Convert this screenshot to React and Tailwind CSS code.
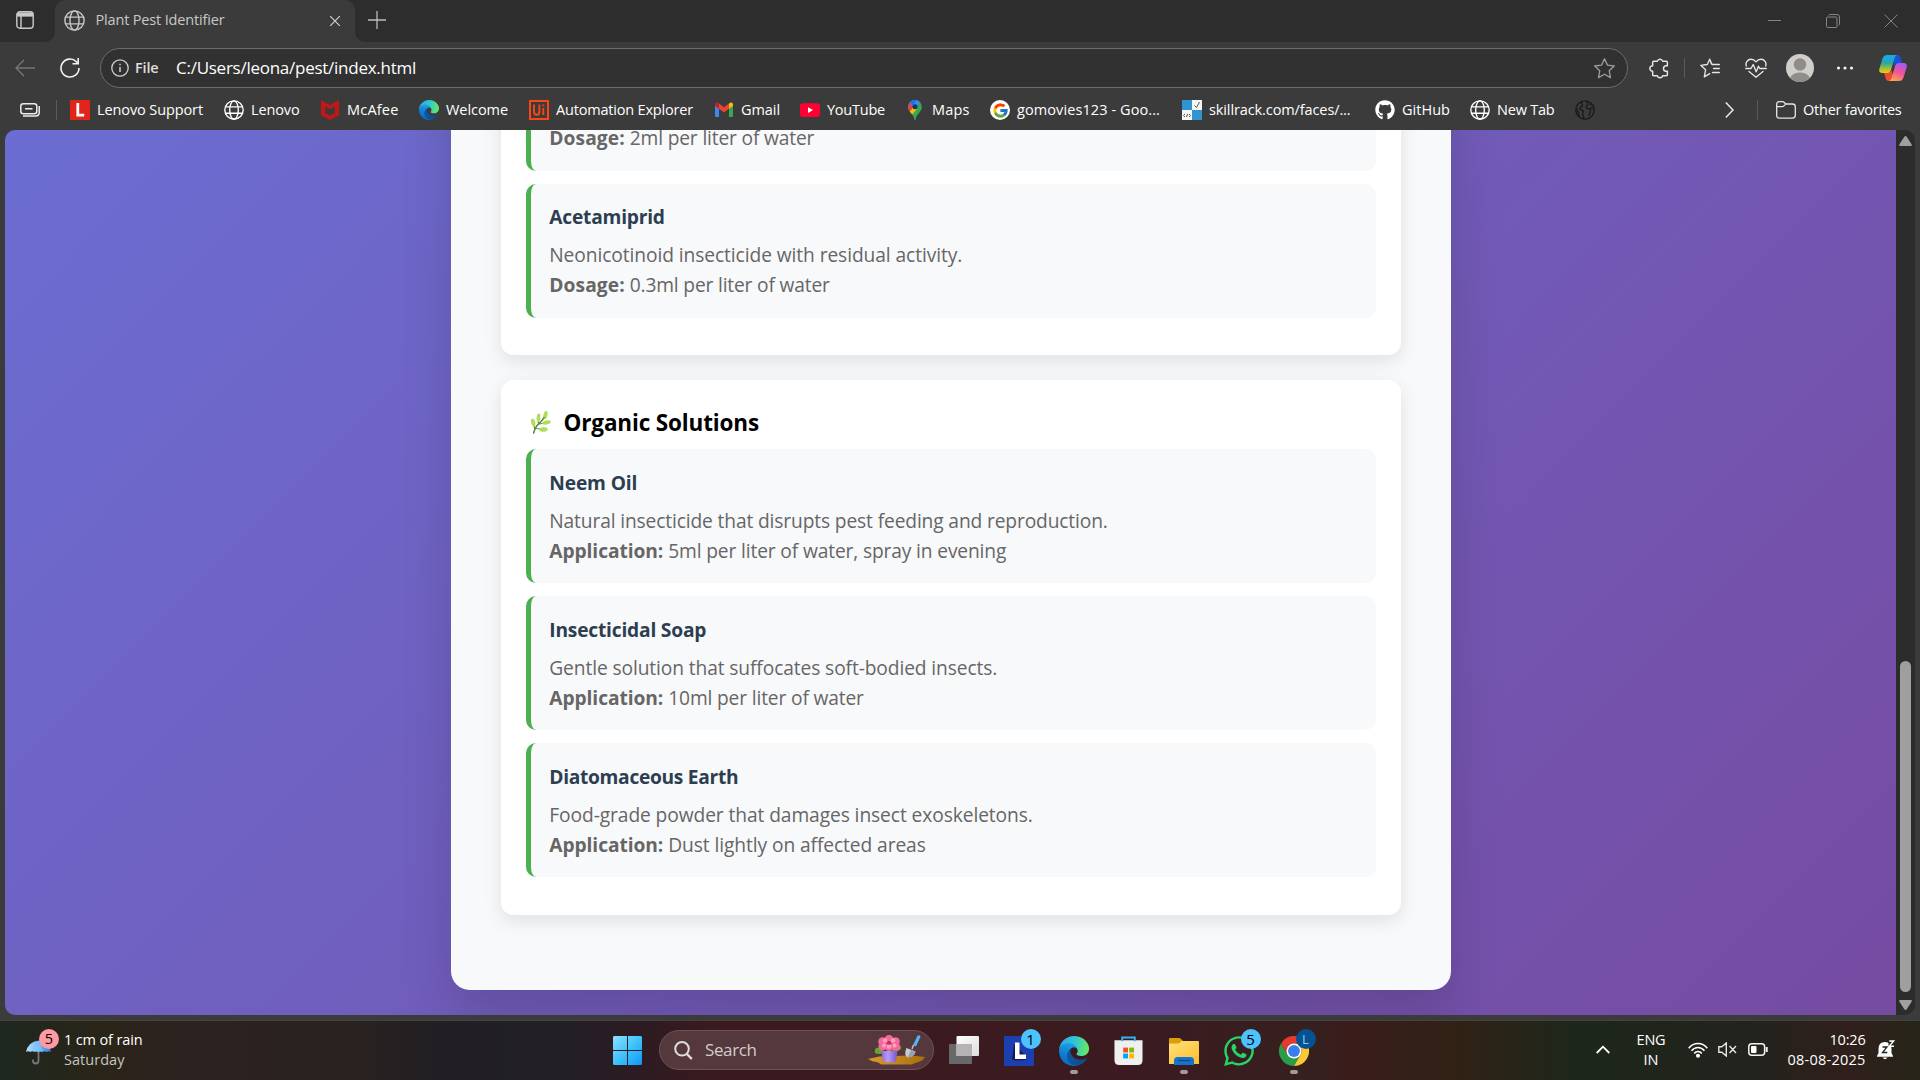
import React, { useLayoutEffect, useRef } from "react";
import { FaGithub, FaWhatsapp } from "react-icons/fa";
import { FcGoogle } from "react-icons/fc";

/* One line of text whose tracking is adjusted so that it spans `w` pixels. */
function Line({ w, className = "", children }) {
  const ref = useRef(null);
  useLayoutEffect(() => {
    const el = ref.current;
    el.style.letterSpacing = "0px";
    const natural = el.getBoundingClientRect().width;
    el.style.letterSpacing = `${(w - natural) / el.textContent.length}px`;
  }, [w]);
  return (
    <span ref={ref} className={`inline-block whitespace-pre ${className}`}>
      {children}
    </span>
  );
}

const Globe = ({ className = "size-5" }) => (
  <svg viewBox="0 0 20 20" className={className} fill="none" stroke="currentColor" strokeWidth="1.35">
    <circle cx="10" cy="10" r="9.2" />
    <ellipse cx="10" cy="10" rx="4.3" ry="9.2" />
    <path d="M1.6 6.8h16.8M1.6 13.2h16.8" />
  </svg>
);

const Edge = ({ id, className }) => (
  <svg viewBox="0 0 256 256" className={className}>
    <defs>
      <linearGradient id={`${id}a`} x1="60" y1="170" x2="236" y2="190" gradientUnits="userSpaceOnUse">
        <stop offset="0" stopColor="#0c59a4" />
        <stop offset="1" stopColor="#114a8b" />
      </linearGradient>
      <linearGradient id={`${id}b`} x1="110" y1="80" x2="60" y2="240" gradientUnits="userSpaceOnUse">
        <stop offset="0" stopColor="#1b9de2" />
        <stop offset=".5" stopColor="#0f7fd3" />
        <stop offset="1" stopColor="#0b6cc4" />
      </linearGradient>
      <linearGradient id={`${id}c`} x1="10" y1="70" x2="250" y2="120" gradientUnits="userSpaceOnUse">
        <stop offset="0" stopColor="#2fa9e8" />
        <stop offset=".45" stopColor="#2fc3d8" />
        <stop offset="1" stopColor="#66eb5e" />
      </linearGradient>
    </defs>
    <path fill={`url(#${id}a)`} d="M231 190.5c-3.4 1.8-6.9 3.4-10.5 4.7a101.3 101.3 0 0 1-35.6 6.4c-47 0-87.9-32.3-87.9-73.8.1-11.4 6.4-21.8 16.4-27.3-42.5 1.8-53.4 46.1-53.4 72 0 73.4 67.6 80.8 82.2 80.8 7.9 0 19.8-2.3 27-4.6l1.3-.4a128 128 0 0 0 66.6-52.8 4 4 0 0 0-6.1-5z" />
    <path fill={`url(#${id}b)`} d="M105.7 241.4a79.2 79.2 0 0 1-22.7-21.3 80.7 80.7 0 0 1 29.5-120c3.2-1.5 8.5-4.1 15.6-4a32.4 32.4 0 0 1 25.7 13 31.9 31.9 0 0 1 6.3 18.7c0-.2 24.5-79.6-80-79.6-43.9 0-80 41.7-80 78.2a130.2 130.2 0 0 0 12.1 56 128 128 0 0 0 156.4 67 75.6 75.6 0 0 1-62.9-8z" />
    <path fill={`url(#${id}c)`} d="M152.3 148.9c-.8 1-3.3 2.5-3.3 5.7 0 2.6 1.7 5.2 4.8 7.3 14.4 10.1 41.6 8.7 41.7 8.7 10.7 0 21.1-2.9 30.3-8.3a61.4 61.4 0 0 0 30.4-52.9c.3-22.4-8-37.3-11.3-43.9C223.5 23.9 177.7 0 128 0 58 0 1 56.2 0 126.2c.5-36.5 36.8-66 80-66 3.5 0 23.5.3 42 10.1 16.3 8.6 24.9 18.9 30.8 29.2 6.2 10.7 7.3 24.1 7.3 29.5 0 5.3-2.7 13.3-7.8 19.9z" />
  </svg>
);

const Chrome = ({ className }) => (
  <svg viewBox="0 0 48 48" className={className}>
    <path fill="#2a9d4a" d="M3.2 12A24 24 0 0 0 24 48l10.4-18L24 24 13.6 30z" />
    <path fill="#fcc934" d="M44.8 12A24 24 0 0 1 24 48l10.4-18A12 12 0 0 0 34.4 18L24 12z" />
    <path fill="#e33b2e" d="M3.2 12 13.6 30 24 24V12h20.8A24 24 0 0 0 3.2 12z" />
    <circle cx="24" cy="24" r="12" fill="#fff" />
    <circle cx="24" cy="24" r="9.5" fill="#3b7ded" />
  </svg>
);

const LenovoSupport = () => (
  <div className="flex size-5 items-center justify-center bg-[#e1251b]">
    <svg viewBox="0 0 20 20" className="size-5" fill="none" stroke="#fff" strokeWidth="2.8">
      <path d="M7.8 3v12.2h6.4" />
    </svg>
  </div>
);

const McAfee = () => (
  <svg viewBox="0 0 20 20" className="size-5">
    <path d="M1 0l9 5L19 0v15.2L10 20l-9-4.8zM5.200 6.600v6.300l4.800 2.600 4.800-2.600V6.600L10 9.300z" fill="#c01818" fillRule="evenodd" />
  </svg>
);

const UiPath = () => (
  <svg viewBox="0 0 20 20" className="size-5" fill="none" stroke="#fa4616">
    <path d="M1 1h18v18H1z" strokeWidth="2" />
    <path d="M5 4.500v7.200q0 3 2.700 3t2.700-3V4.500M14.300 8v7" strokeWidth="1.900" />
    <circle cx="14.300" cy="5.400" r=".8" strokeWidth="1" />
  </svg>
);

const Gmail = () => (
  <svg viewBox="0 0 20 20" className="size-5">
    <path d="M1 5.500v10A1.300 1.300 0 0 0 2.300 17H5V8.500z" fill="#4285f4" />
    <path d="M19 5.500v10a1.300 1.300 0 0 1-1.300 1.500H15V8.500z" fill="#34a853" />
    <path d="M1 5.200V4.500C1 2.800 3 2 4.300 3L5 3.500v5.300L1 6z" fill="#c5221f" />
    <path d="M19 5.200V4.500C19 2.800 17 2 15.700 3l-.7.5v5.300L19 6z" fill="#fbbc04" />
    <path d="M5 3.500l5 3.800 5-3.800v5.300l-5 3.800-5-3.800z" fill="#ea4335" />
  </svg>
);

const YouTube = () => (
  <svg viewBox="0 0 20 20" className="size-5">
    <rect x="0" y="3.200" width="20" height="13.800" rx="3" fill="#ff0033" />
    <path d="M8 7.200v5.800l5-2.900z" fill="#fff" />
  </svg>
);

const Maps = () => (
  <svg viewBox="0 0 20 20" className="size-5">
    <path d="M10 0a6.800 6.800 0 0 1 6.800 6.800c0 5.500-5.300 6.700-6.200 12.700q-.6 1-1.200 0C8.500 13.500 3.200 12.300 3.200 6.800A6.800 6.800 0 0 1 10 0z" fill="#34a853" />
    <path d="M3.200 6.800q0 2.500 1.500 4.600L15.500 2.800A6.800 6.800 0 0 0 3.200 6.800z" fill="#4285f4" />
    <path d="M4.700 11.400 10 5l2.300 3.500-5 6z" fill="#fbbc04" />
    <path d="M3.200 6.800c0 1.800.6 3.200 1.500 4.600L8 7.400 4.700 2.700a6.800 6.800 0 0 0-1.500 4.100z" fill="#ea4335" />
    <path d="M4.700 2.700 8 5.600l3.600-5.400A6.800 6.800 0 0 0 4.700 2.700z" fill="#1a73e8" />
    <circle cx="10" cy="6.800" r="2.500" fill="#14375f" />
  </svg>
);

const GoogleIcon = () => (
  <div className="flex size-5 items-center justify-center rounded-full bg-white">
    <FcGoogle className="size-[17px]" />
  </div>
);

const Skillrack = () => (
  <svg viewBox="0 0 20 20" className="size-5">
    <path d="M0 0h10v10H0zM10 10h10v10H10z" fill="#3095cf" />
    <path d="M10 0h10v10H10zM0 10h10v10H0z" fill="#f5f5f5" />
    <path d="M12.500 5.500l2 2L17.500 2M3 14l-1.500 1.500L3 17M7 14l1.500 1.500L7 17M4.500 17l1-3" stroke="#555" strokeWidth="1" fill="none" />
  </svg>
);

const DarkGlobe = () => (
  <svg viewBox="0 0 20 20" className="size-5" fill="none" stroke="#191919" strokeWidth="1.300">
    <circle cx="10" cy="10" r="9.200" />
    <path d="M6.500 1.800c-.5 2 1.500 2 1 3.700-.3 1.500-3 1.300-2.700 3.200.2 1.300 3 .8 3.500 2.300s-1 2.200-.7 3.700c.2 1.600 1.500 2.500 1 4.300M1.300 8.500c1.800 1.200 1.200 3 2.300 4.500.7 1 .4 2 .4 3.500M12 1.200c-.6 1.400 1.500 2 1 3.300-.5 1.200-2.500 1.500-1.800 3.200.6 1.500 3 .2 4 1.500s-.4 2-.2 3.500c.1 1.200-1.500 1.600-1 3.500M15 4.500l2.500 1M15.500 8l3 .5" />
  </svg>
);

const bookmarks = [
  { label: "Lenovo Support", Icon: LenovoSupport, w: 106, box: "w-[154px]" },
  { label: "Lenovo", Icon: Globe, w: 48.5, box: "w-[96px]" },
  { label: "McAfee", Icon: McAfee, w: 51.5, box: "w-[99px]" },
  { label: "Welcome", Icon: () => <Edge id="bm" className="size-5" />, w: 62, box: "w-[110px]" },
  { label: "Automation Explorer", Icon: UiPath, w: 137, box: "w-[185px]" },
  { label: "Gmail", Icon: Gmail, w: 39, box: "w-[86px]" },
  { label: "YouTube", Icon: YouTube, w: 58, box: "w-[105px]" },
  { label: "Maps", Icon: Maps, w: 37.5, box: "w-[85px]" },
  { label: "gomovies123 - Goo...", Icon: GoogleIcon, w: 143, box: "w-[192px]" },
  { label: "skillrack.com/faces/...", Icon: Skillrack, w: 141.5, box: "w-[193px]" },
  { label: "GitHub", Icon: () => <FaGithub className="size-5" />, w: 48, box: "w-[95px]" },
  { label: "New Tab", Icon: Globe, w: 57.5, box: "w-[105px]" },
];

function TabBar() {
  return (
    <div className="flex h-[42px] shrink-0 items-stretch bg-[#2d2d2d]">
      <div className="flex w-[55px] items-center bg-[#3b3b3b]">
        <div className="flex h-full w-full items-center rounded-br-[10px] bg-[#2d2d2d] pl-4">
          <svg viewBox="0 0 18 18" className="mt-[-2px] size-[18px]" fill="none" stroke="#c9c9c9" strokeWidth="1.400">
            <rect x=".8" y=".8" width="16.400" height="16.400" rx="3" />
            <path d="M1 3.200h16M1 4.500h16M5 5v12" />
            <path d="M2 2.300h14v2.400H2z" fill="#c9c9c9" />
          </svg>
        </div>
      </div>
      <div className="flex w-[300px] items-center rounded-t-[10px] bg-[#3b3b3b] pb-[2px] pl-[8.500px] text-[#c8c8c8]">
        <Globe className="size-[21px]" />
        <Line w={129} className="ml-[11px] text-[14.500px]">Plant Pest Identifier</Line>
        <svg viewBox="0 0 10 10" className="mt-[1px] ml-[105.500px] size-[10px]" stroke="#d0d0d0" strokeWidth="1.200">
          <path d="M0 0l10 10M10 0L0 10" />
        </svg>
      </div>
      <div className="flex flex-1 items-center bg-[#3b3b3b]">
        <div className="flex h-full flex-1 items-center rounded-bl-[10px] bg-[#2d2d2d] pr-[22px] pl-[13px]">
          <svg viewBox="0 0 18 18" className="mt-[-3px] size-[18px]" stroke="#bdbdbd" strokeWidth="1.300">
            <path d="M9 0v18M0 9h18" />
          </svg>
          <div className="flex-1" />
          <svg viewBox="0 0 14 14" className="size-[14px]" stroke="#858585" strokeWidth="1">
            <path d="M0 6.500h13" />
          </svg>
          <svg viewBox="0 0 14 14" className="ml-11 size-[14px]" fill="none" stroke="#858585">
            <rect x=".5" y="3" width="10.500" height="10.500" rx="1" />
            <path d="M2.500 1.500q.5-1 1.500-1h7q2.500 0 2.500 2.500v7q0 1-1 1.500" />
          </svg>
          <svg viewBox="0 0 14 14" className="ml-11 size-[14px]" stroke="#858585" strokeWidth="1">
            <path d="M.5.5l13 13M13.500.5l-13 13" />
          </svg>
        </div>
      </div>
    </div>
  );
}

function AddressRow() {
  return (
    <div className="flex h-[52px] shrink-0 items-center text-[#e4e4e4]">
      <svg viewBox="0 0 20 18" className="ml-[15px] h-[18px] w-5" fill="none" stroke="#757575" strokeWidth="1.400">
        <path d="M20 9H1M9 1L1 9l8 8" />
      </svg>
      <svg viewBox="0 0 20 20" className="ml-[25px] size-5" fill="none" stroke="#f2f2f2" strokeWidth="1.600">
        <path d="M19 10a9 9 0 1 1-2.600-6.300L18 5.500M18.200 0v5.700h-5.700" />
      </svg>
      <div className="ml-5 flex h-10 w-[1528px] items-center rounded-full border border-[#6b6b6b] bg-[#313131] pr-3 pl-[10px]">
        <svg viewBox="0 0 18 18" className="size-[18px]" fill="none" stroke="#cfcfcf" strokeWidth="1.300">
          <circle cx="9" cy="9" r="8.200" />
          <path d="M9 8v5M9 4.700v1.500" strokeWidth="1.500" />
        </svg>
        <Line w={23.5} className="ml-[6px] text-[14.500px] font-semibold text-[#dedede]">File</Line>
        <Line w={240} className="ml-[17.500px] text-[17px] text-white">C:/Users/leona/pest/index.html</Line>
        <div className="flex-1" />
        <svg viewBox="0 0 20 20" className="size-[21px]" fill="none" stroke="#9c9c9c" strokeWidth="1.250" strokeLinejoin="round">
          <path d="M10 .8l2.800 6 6.500.8-4.800 4.500 1.200 6.600L10 15.500l-5.700 3.200 1.200-6.600L.7 7.600l6.500-.8z" />
        </svg>
      </div>
      <svg viewBox="0 0 20 20" className="ml-[21px] size-[21px]" fill="none" stroke="#e6e6e6" strokeWidth="1.400" strokeLinejoin="round">
        <path d="M4.500 3H8a2.600 2.600 0 0 1 5 0h3.500q1 0 1 1v3.300h-1a2.700 2.700 0 0 0 0 5.400h1V16q0 1-1 1H13a2.600 2.600 0 0 1-5 0H4.500q-1 0-1-1v-3.300a2.700 2.700 0 0 1 0-5.400V4q0-1 1-1z" />
      </svg>
      <div className="ml-[14px] h-5 w-px bg-[#5a5a5a]" />
      <svg viewBox="0 0 20 20" className="ml-[15px] size-5" fill="none" stroke="#e6e6e6" strokeWidth="1.350" strokeLinejoin="round" strokeLinecap="round">
        <path d="M11.500 6L9.700 1.200 7.300 6.500.8 7.300l4.800 4.500-1.300 7 5.400-3.200M9.700 1.200l2.400 5.300h7.200M13.500 10.500h5.800M12.500 14.500h6.800" />
      </svg>
      <svg viewBox="0 0 22 20" className="ml-[25px] h-5 w-[22px]" fill="none" stroke="#e6e6e6" strokeWidth="1.350" strokeLinejoin="round" strokeLinecap="round">
        <path d="M1.300 8C.2 4.500 2.500 1.200 6 1.200q3 0 5 2.600 2-2.600 5-2.600c3.500 0 5.800 3.300 4.700 6.800M.7 10.500H6l2.200-4 3 7.300 2.300-5.600 1.200 2.300h6.600M4 13.500l7 5.700 7-5.700" />
      </svg>
      <svg viewBox="0 0 28 28" className="ml-[19px] size-7">
        <defs>
          <clipPath id="avatar">
            <circle cx="14" cy="14" r="14" />
          </clipPath>
        </defs>
        <circle cx="14" cy="14" r="14" fill="#d0ceca" />
        <g clipPath="url(#avatar)" fill="#8f8c89">
          <circle cx="14" cy="10.500" r="6.200" />
          <ellipse cx="14" cy="25.500" rx="10" ry="7" />
        </g>
      </svg>
      <svg viewBox="0 0 18 4" className="ml-[22px] h-1 w-[18px]" fill="#f0f0f0">
        <circle cx="2.500" cy="2" r="1.600" />
        <circle cx="9" cy="2" r="1.600" />
        <circle cx="15.500" cy="2" r="1.600" />
      </svg>
      <svg viewBox="0 0 28 26" className="ml-[25px] h-[26px] w-7">
        <defs>
          <linearGradient id="cp1" x1="0" y1="0" x2="0" y2="1">
            <stop offset="0" stopColor="#17a7f2" />
            <stop offset=".45" stopColor="#2aa7a5" />
            <stop offset=".75" stopColor="#a2bd3c" />
            <stop offset="1" stopColor="#f9c80e" />
          </linearGradient>
          <linearGradient id="cp2" x1=".7" y1="0" x2=".3" y2="1">
            <stop offset="0" stopColor="#a55af0" />
            <stop offset=".5" stopColor="#f0529b" />
            <stop offset="1" stopColor="#ffa34e" />
          </linearGradient>
        </defs>
        <path d="M13 0h5.500q2 0 2.600 2l1.900 6.500h-4.500q-2.500 0-3.200 2.500z" fill="#1653d6" />
        <path d="M15 26H9.500q-2 0-2.600-2L5 17.500h4.500q2.500 0 3.200-2.500z" fill="#ee4b32" />
        <path d="M8 0h10q-1.800.4-2.500 3l-3.700 12.500Q11 18 8.500 18H3.300Q-.5 18 .3 14L3.500 3.500Q4.700 0 8 0z" fill="url(#cp1)" />
        <path d="M20 26H10q1.800-.4 2.500-3l3.700-12.500Q17 8 19.500 8h5.200q3.800 0 3 4l-3.200 10.500Q23.300 26 20 26z" fill="url(#cp2)" />
      </svg>
    </div>
  );
}

function BookmarksBar() {
  return (
    <div className="flex h-9 shrink-0 items-center pb-[4px] text-[14.500px] text-white">
      <svg viewBox="0 0 20 14" className="ml-5 h-[14px] w-5" fill="none" stroke="#ececec" strokeWidth="1.500">
        <rect x=".8" y=".8" width="16" height="10" rx="2.500" />
        <path d="M5 5.800h7.500M3 13h12.500Q19.200 13 19.200 9.500V3" />
      </svg>
      <div className="mr-[13px] ml-4 h-5 w-px bg-[#5a5a5a]" />
      {bookmarks.map(({ label, Icon, w, box }) => (
        <div key={label} className={`flex shrink-0 items-center ${box}`}>
          <Icon />
          <Line w={w} className="ml-[7px]">{label}</Line>
        </div>
      ))}
      <DarkGlobe />
      <svg viewBox="0 0 9 16" className="ml-[130px] h-4 w-[9px]" fill="none" stroke="#ececec" strokeWidth="1.500">
        <path d="M.8.5L8 8 .8 15.500" />
      </svg>
      <div className="ml-[23px] h-5 w-px bg-[#5a5a5a]" />
      <svg viewBox="0 0 20 18" className="ml-[18px] h-[18px] w-5" fill="none" stroke="#e6e6e6" strokeWidth="1.300">
        <path d="M.7 3.500Q.7.700 3.200.700h3.300q1 0 1.800.8L9.800 3h6.700q2.800 0 2.800 2.800v8.500q0 2.800-2.800 2.800H3.500Q.7 17.200.7 14.500zM.7 5.700h5.500q1 0 1.700-.8L9.800 3" />
      </svg>
      <Line w={98.5} className="ml-[7px]">Other favorites</Line>
    </div>
  );
}

function Remedy({ name, nameW, text, textW, label, labelW, detail, detailW }) {
  return (
    <div className="mb-[13px] h-[134px] shrink-0 rounded-[10px] border-l-[5px] border-[#4caf50] bg-[#f8f9fb] pt-[18.750px] pl-[18.750px] text-[19.200px] leading-[30px] text-[#666]">
      <h4 className="h-[38px] text-[#2c3e50]">
        {name && <Line w={nameW} className="font-bold">{name}</Line>}
      </h4>
      <p className="h-[30px]">{text && <Line w={textW}>{text}</Line>}</p>
      <p className="flex h-[30px]">
        <Line w={labelW} className="mr-[5px] font-bold">{label}</Line>
        <Line w={detailW}>{detail}</Line>
      </p>
    </div>
  );
}

const chemical = [
  { label: "Dosage:", labelW: 75.5, detail: "2ml per liter of water", detailW: 184.5 },
  { name: "Acetamiprid", nameW: 115.5, text: "Neonicotinoid insecticide with residual activity.", textW: 413, label: "Dosage:", labelW: 75.5, detail: "0.3ml per liter of water", detailW: 200 },
];

const organic = [
  { name: "Neem Oil", nameW: 88, text: "Natural insecticide that disrupts pest feeding and reproduction.", textW: 558.5, label: "Application:", labelW: 114, detail: "5ml per liter of water, spray in evening", detailW: 338 },
  { name: "Insecticidal Soap", nameW: 157, text: "Gentle solution that suffocates soft-bodied insects.", textW: 448, label: "Application:", labelW: 114, detail: "10ml per liter of water", detailW: 195.5 },
  { name: "Diatomaceous Earth", nameW: 189, text: "Food-grade powder that damages insect exoskeletons.", textW: 483.5, label: "Application:", labelW: 114, detail: "Dust lightly on affected areas", detailW: 257.5 },
];

const Herb = () => (
  <svg viewBox="0 0 20 23" className="h-[23px] w-5">
    <path d="M2.500 22.500Q4 16 8.500 12 13 8 15 2M4 19Q3 14 2 10M7.500 13.500L7 7M8 13Q13 12 17 12M5 17.500q5 .5 9 1" stroke="#5d8a3a" strokeWidth="1.100" fill="none" />
    <g fill="#b2dc5c">
      <ellipse cx="2.200" cy="11.500" rx="2" ry="4" transform="rotate(-15 2.200 11.500)" />
      <ellipse cx="7.500" cy="6.500" rx="1.900" ry="4" transform="rotate(5 7.500 6.500)" />
      <ellipse cx="14.500" cy="4" rx="2" ry="4.200" transform="rotate(12 14.500 4)" />
      <ellipse cx="15.500" cy="11.500" rx="4.300" ry="2" transform="rotate(-12 15.500 11.500)" />
      <ellipse cx="12.500" cy="18.500" rx="4.300" ry="2.200" transform="rotate(-8 12.500 18.500)" />
    </g>
    <path d="M2.500 22.500Q4 16 8.500 12 12 9 13.500 6" stroke="#5d8a3a" strokeWidth="1.200" fill="none" />
  </svg>
);

function Page() {
  return (
    <div className="flex h-[885px] w-[1891px] flex-col justify-end overflow-hidden rounded-l-[10px]">
      <div className="flex h-[2270px] shrink-0 flex-col items-center justify-end bg-linear-[135deg,#667eea_0%,#764ba2_100%] pb-[25px]">
        <div className="flex h-[2200px] w-[1000px] flex-col justify-end rounded-[18.750px] bg-[#f8f9fb] px-[50px] pb-[75px] shadow-[0_25px_50px_rgba(0,0,0,0.15)]">
          <section className="mb-[25px] flex h-[500px] shrink-0 flex-col justify-end rounded-[12.500px] bg-white px-[25px] pb-[24.500px] shadow-[0_6px_19px_rgba(0,0,0,0.1)]">
            {chemical.map((r) => (
              <Remedy key={r.detail} {...r} />
            ))}
          </section>
          <section className="flex h-[535px] shrink-0 flex-col rounded-[12.500px] bg-white px-[25px] shadow-[0_6px_19px_rgba(0,0,0,0.1)]">
            <div className="flex h-[69px] shrink-0 items-center pt-[15px] pl-[5px]">
              <Herb />
              <h3 className="ml-[13px] pt-px text-[22.500px] font-bold text-black">
                <Line w={195.5}>Organic Solutions</Line>
              </h3>
            </div>
            {organic.map((r) => (
              <Remedy key={r.detail} {...r} />
            ))}
          </section>
        </div>
      </div>
    </div>
  );
}

function ScrollBar() {
  return (
    <div className="flex w-[19px] flex-col items-center rounded-r-[10px] bg-[#2c2c2c] pt-[6px] pb-[5px]">
      <svg viewBox="0 0 13 10" className="h-[10px] w-[13px]" fill="#9f9f9f">
        <path d="M5.300.8q1.200-1.500 2.400 0l5 7.700q.6 1.500-.9 1.500H1.200Q-.3 10 .3 8.500z" />
      </svg>
      <div className="mt-[515px] h-[331px] w-[11px] rounded-full bg-[#9f9f9f]" />
      <svg viewBox="0 0 13 10" className="mt-[8px] h-[10px] w-[13px]" fill="#9f9f9f">
        <path d="M5.300 9.200q1.200 1.500 2.400 0l5-7.700Q13.300 0 11.800 0H1.200Q-.3 0 .3 1.500z" />
      </svg>
    </div>
  );
}

function AppSlot({ children, badge, badgeClass = "bg-[#4cc2ff] text-[15px] text-black", running }) {
  return (
    <div className="relative flex h-[59px] w-[55px] shrink-0 items-center justify-center">
      {children}
      {badge && (
        <span className={`absolute top-[8px] left-[29px] flex size-5 items-center justify-center rounded-full leading-5 ${badgeClass}`}>
          {badge}
        </span>
      )}
      {running && <span className="absolute bottom-[6px] left-[23.500px] h-1 w-2 rounded-full bg-[#a39a9b]" />}
    </div>
  );
}

const Umbrella = () => (
  <svg viewBox="0 0 26 30" className="h-[30px] w-[26px]">
    <defs>
      <linearGradient id="umb" x1="0" y1="0" x2="1" y2="0">
        <stop offset="0" stopColor="#b9e0ff" />
        <stop offset=".5" stopColor="#6fb7f3" />
        <stop offset="1" stopColor="#2f86dc" />
      </linearGradient>
    </defs>
    <path d="M12.500 14v10.500q0 3-3 3-2.500 0-2.500-3v-1" fill="none" stroke="#77777b" strokeWidth="1.800" />
    <path d="M0 16Q2 6 12.500 4.500 23 6 25 16q-2-1.500-4.200 0-2-1.500-4.200 0-2-1.500-4.100 0-2-1.500-4.100 0-2-1.500-4.200 0-2-1.500-4.200 0z" fill="url(#umb)" />
    <path d="M8.500 16q0-8 4-11 4 3 4 11" fill="#8cc8fa" opacity=".5" />
  </svg>
);

const Flower = () => (
  <svg viewBox="0 0 57 30" className="h-[30px] w-[57px]">
    <defs>
      <linearGradient id="sand" x1="0" y1="0" x2="1" y2="0">
        <stop offset="0" stopColor="#d99a2b" />
        <stop offset="1" stopColor="#a96f0c" />
      </linearGradient>
      <linearGradient id="pot" x1="0" y1="0" x2="1" y2="0">
        <stop offset="0" stopColor="#8f6be0" />
        <stop offset=".4" stopColor="#b79bf5" />
        <stop offset="1" stopColor="#7a52cc" />
      </linearGradient>
    </defs>
    <path d="M0 24q14-4 28-3 14-1.500 29 1-2 4-8 5.500l-6 2H13q-3-3-8-3z" fill="url(#sand)" />
    <path d="M7 18q-1-6 4-5 5 0 4 5-4 2-8 0zM24 15q1-5 5-4 5-1 4 3-4 4-9 3z" fill="#5fa82e" />
    <path d="M13.500 16h16l-1.500 10.500q-6.500 2-13 0z" fill="url(#pot)" />
    <g fill="#f5689c">
      <circle cx="21" cy="4.300" r="4.300" />
      <circle cx="14.500" cy="6.500" r="4.300" />
      <circle cx="27.500" cy="6.500" r="4.300" />
      <circle cx="14.500" cy="11.500" r="4" />
      <circle cx="28" cy="11.500" r="4" />
      <circle cx="21" cy="12" r="4" />
    </g>
    <g fill="#ff9fbe">
      <circle cx="17" cy="5.500" r="2.300" />
      <circle cx="25" cy="5.500" r="2.300" />
      <circle cx="16" cy="10.500" r="2" />
      <circle cx="26.500" cy="10.500" r="2" />
      <circle cx="21" cy="11.500" r="2.300" />
    </g>
    <circle cx="21" cy="7.800" r="2" fill="#d5245c" />
    <path d="M49.500.8q2.500-1.500 3 1L48 11.500l-3-1.500z" fill="#4fb4f5" />
    <path d="M45.500 10l-1.500 4" stroke="#b9bec6" strokeWidth="1.600" />
    <path d="M38.500 13l9 3.500q-1 5.500-8 6-4-3-1-9.500z" fill="#c5ccd4" />
    <path d="M43 15l4.500 1.500q-1 5.500-8 6z" fill="#98a1ac" />
  </svg>
);

function Taskbar() {
  return (
    <div className="flex h-[60px] shrink-0 items-center border-t border-[#474342] bg-linear-[90deg,#1e271e_0px,#25261b_60px,#2b2418_110px,#2c2221_180px,#29221f_350px,#211f25_450px,#221f27_560px,#2d1b22_640px,#3a1a1f_720px,#3b1a20_1100px,#36201f_1320px,#3a1c1b_1350px,#2f2215_1460px,#1d271b_1580px,#23231d_1750px,#301f1c_1850px,#262419_1910px]">
      <div className="flex w-[599.500px] shrink-0 items-center">
        <div className="relative ml-[26px]">
          <Umbrella />
          <span className="absolute top-[-7px] left-[13px] flex size-5 items-center justify-center rounded-full bg-[#ff99a4] text-[14.500px] leading-5 text-black">5</span>
        </div>
        <div className="ml-3 flex flex-col items-start pb-[2px] text-[14.500px] leading-5 text-white">
          <Line w={78.5}>1 cm of rain</Line>
          <Line w={60.5} className="text-[#c8c5c4]">Saturday</Line>
        </div>
      </div>
      <AppSlot>
        <svg viewBox="0 0 29 29" className="size-[29px]">
          <defs>
            <linearGradient id="win" x1="0" y1="0" x2="1" y2="1">
              <stop offset="0" stopColor="#8fe0ff" />
              <stop offset=".5" stopColor="#3fc4fb" />
              <stop offset="1" stopColor="#0f97f8" />
            </linearGradient>
          </defs>
          <path d="M1 0h13v14H0V1zM15 0h13l1 1v13H15zM0 15h14v14H1l-1-1zM15 15h14v13l-1 1H15z" fill="url(#win)" />
        </svg>
      </AppSlot>
      <div className="mt-[-1px] ml-[4.500px] flex h-10 w-[275px] shrink-0 items-center rounded-full border border-[#6d5357] bg-[#54383c] pr-[8px] pl-[14px]">
        <svg viewBox="0 0 19 19" className="size-[19px]" fill="none" stroke="#e2dddd" strokeWidth="2">
          <circle cx="8" cy="7.800" r="6.800" />
          <path d="M12.800 12.800l5 5.200" strokeWidth="2.400" />
        </svg>
        <Line w={51.5} className="ml-[12px] text-[17px] text-[#d5cccd]">Search</Line>
        <div className="flex-1" />
        <Flower />
      </div>
      <div className="w-[2.500px]" />
      <AppSlot>
        <svg viewBox="0 0 30 28" className="mt-[-1px] h-7 w-[30px]">
          <defs>
            <linearGradient id="tv" x1="0" y1="0" x2="1" y2="1">
              <stop offset="0" stopColor="#fff" />
              <stop offset="1" stopColor="#dedcdc" />
            </linearGradient>
          </defs>
          <rect x="0" y="8" width="23" height="20" rx="1" fill="#68676a" />
          <rect x="7.500" y="0" width="22.500" height="20" rx="1" fill="url(#tv)" />
          <path d="M7.500 8H23v12H7.500z" fill="#b5b3b3" />
        </svg>
      </AppSlot>
      <AppSlot badge="1">
        <svg viewBox="0 0 30 30" className="size-[30px]">
          <path d="M0 0h30v30H0z" fill="#1c3faf" />
          <path d="M10 8l-2 15 3 1.500 11-.5V20z" fill="#101f50" />
          <path d="M11 6.500h4.500v12H22v4.500H11z" fill="#fff" />
        </svg>
      </AppSlot>
      <AppSlot running>
        <Edge id="tb" className="size-[30px]" />
      </AppSlot>
      <AppSlot>
        <svg viewBox="0 0 29 30" className="mr-px size-[29px]">
          <path d="M0 4.500h29V25q0 5-5 5H5q-5 0-5-5z" fill="#efefef" />
          <path d="M8 5.500V1.500h13v4" fill="none" stroke="#2fb5f0" strokeWidth="2" />
          <path d="M9 12h5v5H9z" fill="#f25022" />
          <path d="M15.200 12h5v5h-5z" fill="#7fba00" />
          <path d="M9 18.200h5v5H9z" fill="#00a4ef" />
          <path d="M15.200 18.200h5v5h-5z" fill="#ffb900" />
        </svg>
      </AppSlot>
      <AppSlot running>
        <svg viewBox="0 0 30 27" className="mt-[1px] h-[27px] w-[30px]">
          <defs>
            <linearGradient id="fold" x1="0" y1="0" x2="1" y2="1">
              <stop offset="0" stopColor="#ffe07a" />
              <stop offset="1" stopColor="#fdbf2d" />
            </linearGradient>
          </defs>
          <path d="M0 1q0-1 1-1h9q1 0 1.800.8L14 3l-3 5H0z" fill="#dd9e0c" />
          <path d="M0 5.500h10L12.500 3H29q1 0 1 1v22H0z" fill="url(#fold)" />
          <path d="M5 27v-4.500Q5 19 8.500 19h13q3.500 0 3.500 3.500V27z" fill="#1374cf" />
          <path d="M9 22.500h12.500" stroke="#0b4a8e" strokeWidth="1.200" />
        </svg>
      </AppSlot>
      <AppSlot badge="5">
        <FaWhatsapp className="size-[34px] text-[#25d366]" />
      </AppSlot>
      <AppSlot badge="L" badgeClass="bg-[#035291] text-[#9cc3e8] text-[13px]" running>
        <Chrome className="size-[30px]" />
      </AppSlot>
      <svg viewBox="0 0 14 9" className="mt-[-2px] ml-[274px] h-[9px] w-[14px]" fill="none" stroke="#fff" strokeWidth="1.800">
        <path d="M.7 8L7 1.700 13.300 8" />
      </svg>
      <div className="ml-[24px] flex w-[35px] flex-col items-center pb-[2px] text-[14.500px] leading-5 text-white">
        <Line w={29}>ENG</Line>
        <Line w={15}>IN</Line>
      </div>
      <svg viewBox="0 0 20 16" className="mt-[-2px] ml-[19px] h-4 w-5" fill="none" stroke="#fff" strokeWidth="1.500">
        <path d="M.7 6.200Q4.500 1.500 10 1.500t9.300 4.700" />
        <path d="M3.500 8.800Q6.200 5.500 10 5.500t6.500 3.300" />
        <path d="M6.200 11.500Q7.700 9.400 10 9.400t3.800 2.100" />
        <circle cx="10" cy="13.700" r="1.300" fill="#fff" />
      </svg>
      <svg viewBox="0 0 19 15" className="mt-[-2px] ml-[10px] h-[15px] w-[19px]" fill="none" stroke="#e5e5e5" strokeWidth="1.400">
        <path d="M.8 4.800h3L8.300 1v13L3.800 10.200h-3zM11.500 4l6.500 7M18 4l-6.500 7" />
      </svg>
      <svg viewBox="0 0 20 13" className="mt-[-2px] ml-[11px] h-[13px] w-5" fill="none" stroke="#f2f2f2" strokeWidth="1.500">
        <rect x=".8" y=".8" width="15.800" height="11.400" rx="3" />
        <rect x="3" y="3" width="5.500" height="7" rx="1" fill="#fff" stroke="none" />
        <path d="M18.700 4v5" strokeWidth="2" />
      </svg>
      <div className="ml-[17px] flex w-[81px] flex-col items-end pb-[2px] text-[14.500px] leading-5 text-white">
        <Line w={36}>10:26</Line>
        <Line w={78}>08-08-2025</Line>
      </div>
      <svg viewBox="0 0 18 20" className="mt-[-1px] ml-[11px] h-5 w-[18px]">
        <path d="M8 2Q1.500 2 1.500 9v4L0 16v.8h16V16l-1.500-3V9Q14.500 2 8 2zM5.500 17.500q2.500 3.500 5 0z" fill="#fff" />
        <path d="M5.500 7h4.500l-4.500 5.500h4.800" fill="none" stroke="#222" strokeWidth="1.300" />
        <path d="M11.500 0h6v7h-6z" fill="#26241b" />
        <path d="M12.200 1h4.500l-4.500 5.300h4.800" fill="none" stroke="#fff" strokeWidth="1.400" />
      </svg>
    </div>
  );
}

export default function App() {
  return (
    <div className="flex h-[1080px] w-[1920px] flex-col overflow-hidden bg-[#3b3b3b] font-['Open_Sans','Noto_Sans',sans-serif]">
      <TabBar />
      <AddressRow />
      <BookmarksBar />
      <div className="mb-[5px] ml-[5px] flex h-[885px] shrink-0">
        <Page />
        <ScrollBar />
      </div>
      <Taskbar />
    </div>
  );
}
